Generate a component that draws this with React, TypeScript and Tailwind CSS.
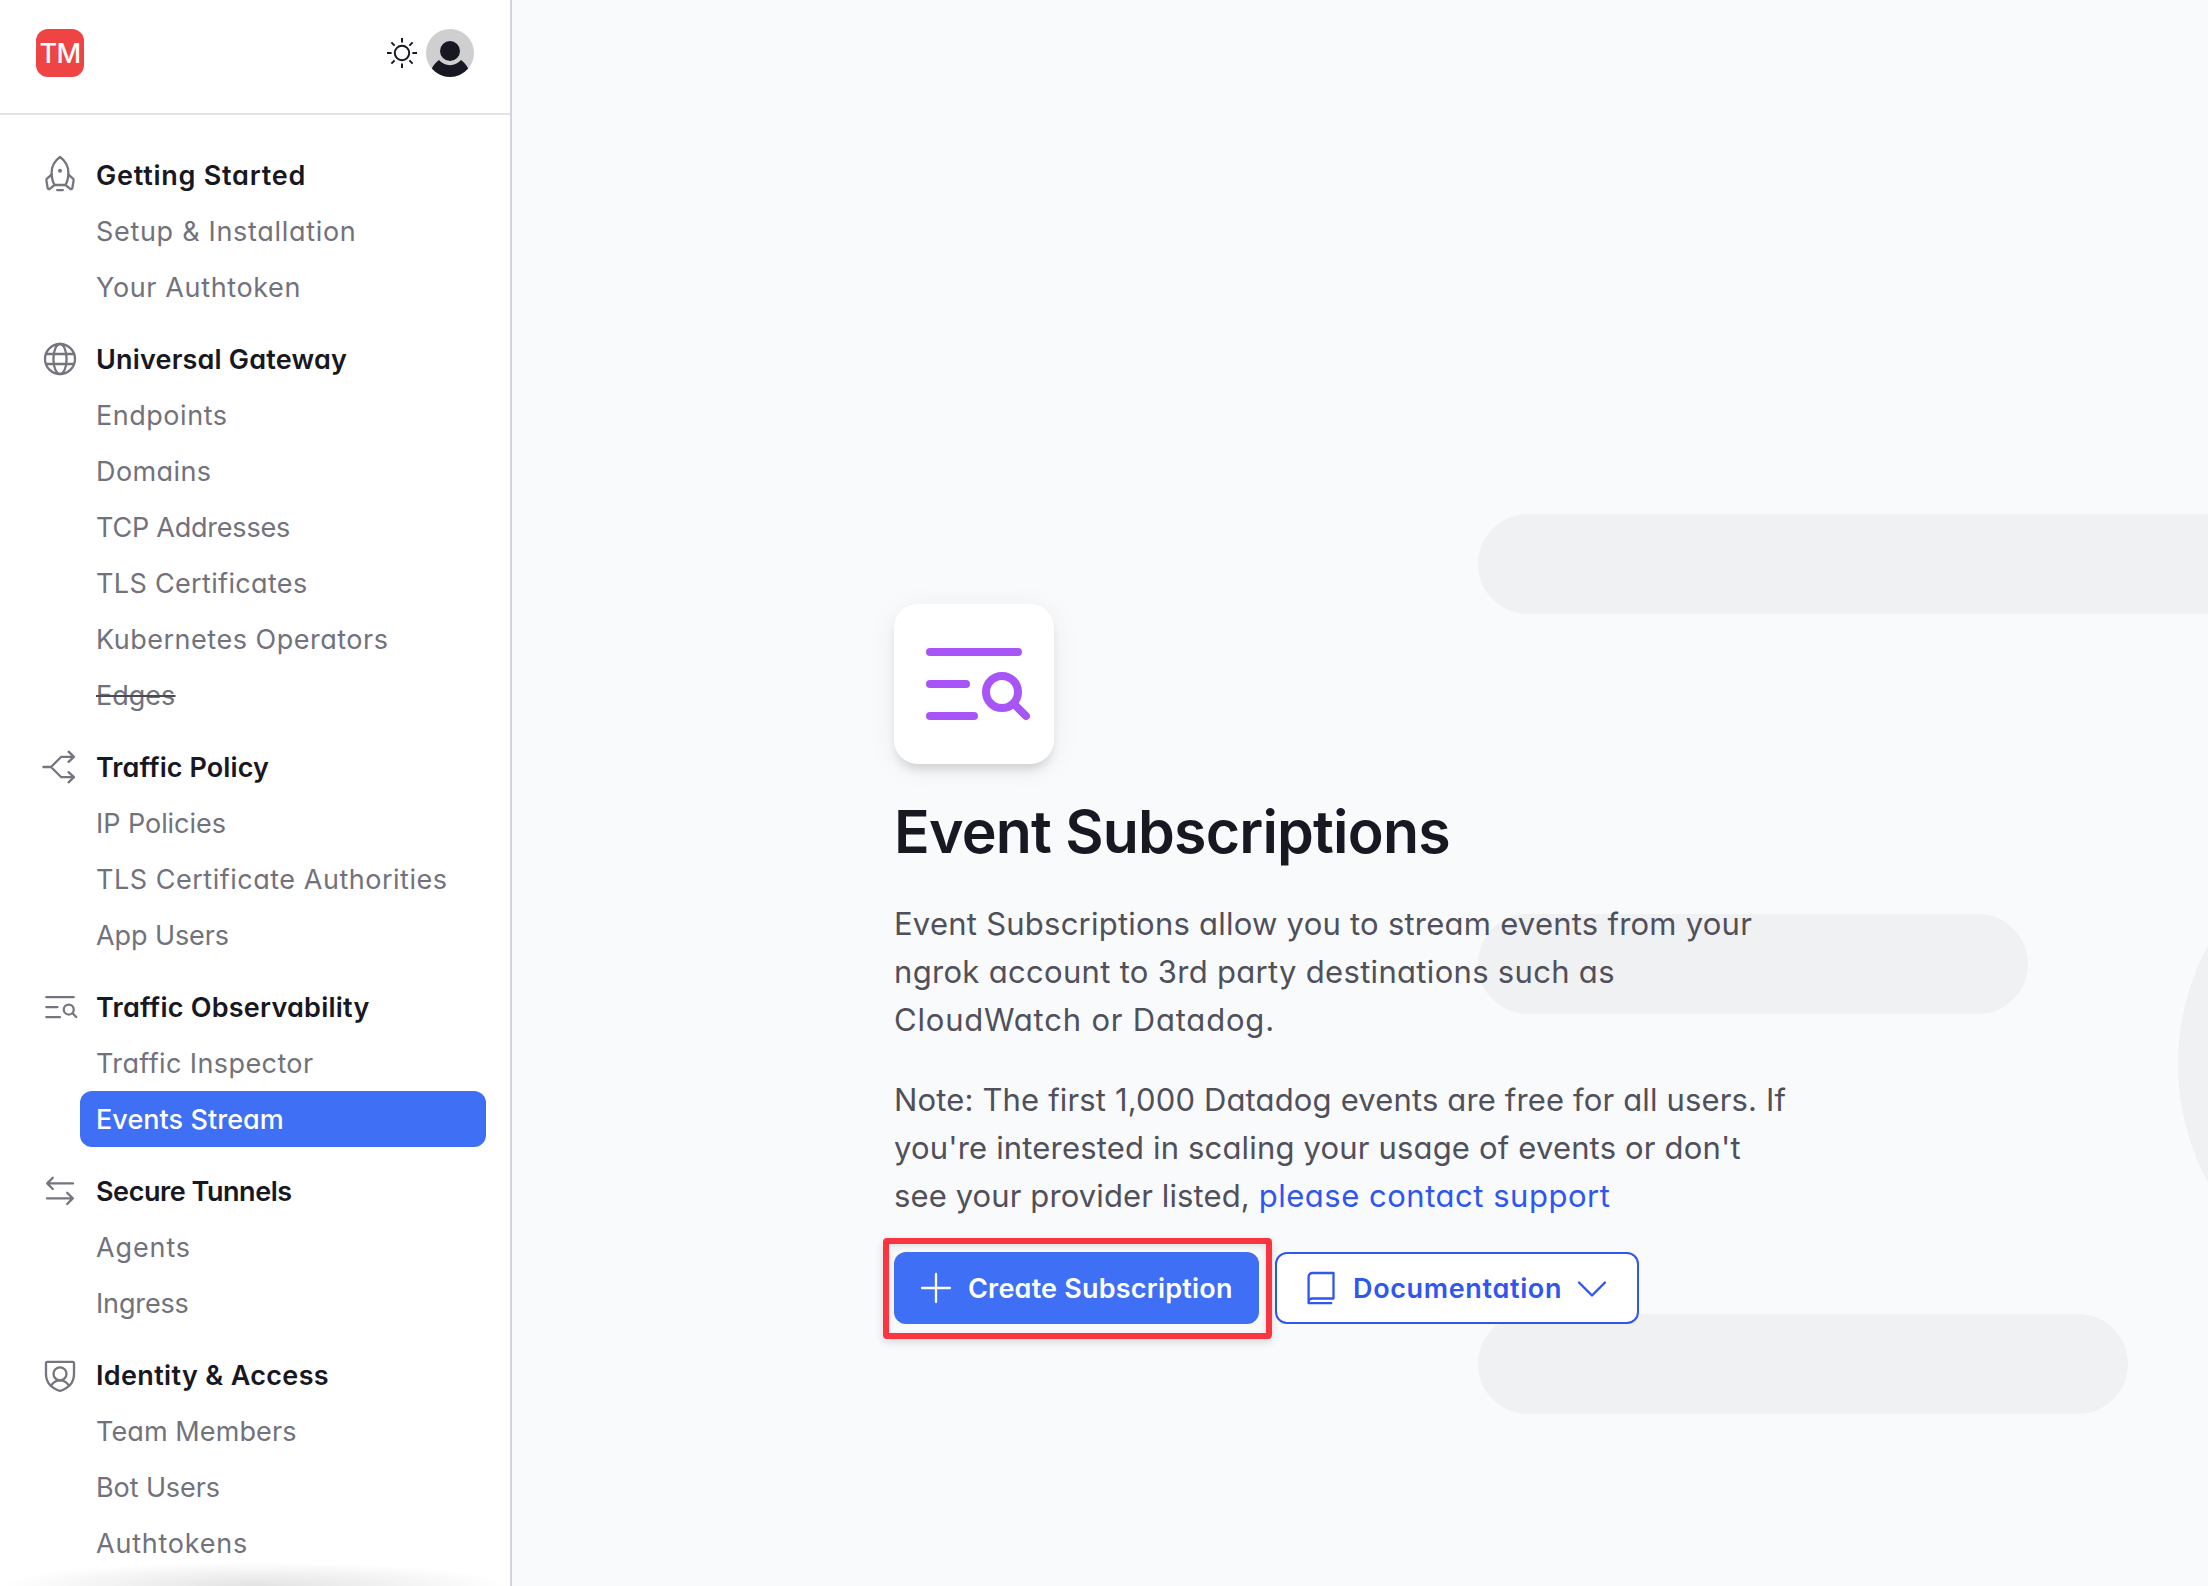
import type { ReactNode } from "react";

type Item = { label: string; tracking: string; state?: "active" | "deprecated" };
type Group = { label: string; tracking: string; icon: ReactNode; items: Item[] };

function NavIcon({ children }: { children: ReactNode }) {
  return (
    <svg
      viewBox="0 0 40 40"
      className="size-10 shrink-0 text-[#75757f]"
      fill="none"
      stroke="currentColor"
      strokeWidth="2.3"
      strokeLinecap="round"
      strokeLinejoin="round"
    >
      {children}
    </svg>
  );
}

const rocket = (
  <NavIcon>
    <path d="M20 2C16 4.800 11.600 10.500 11.600 18c0 5 1.200 9 3 12h10.800c1.800-3 3-7 3-12C28.400 10.500 24 4.800 20 2Z" />
    <path d="M11.800 19.400 7 23.600a2 2 0 0 0-.6 1.800l1.300 7.800a1.300 1.300 0 0 0 2.100.6l4.700-3.800M28.200 19.400l4.800 4.200a2 2 0 0 1 .6 1.800l-1.300 7.800a1.300 1.300 0 0 1-2.100.6l-4.700-3.800M17.200 35.200h5.600" />
    <circle cx="20" cy="15.7" r="2" fill="currentColor" stroke="none" />
  </NavIcon>
);

const globe = (
  <NavIcon>
    <circle cx="20" cy="20" r="15" />
    <ellipse cx="20" cy="20" rx="6.6" ry="15" />
    <path d="M6 15h28M6 25h28" />
  </NavIcon>
);

const split = (
  <NavIcon>
    <path d="M3.4 20H11l10.300-10.200h12.400M28.600 4.700l5.300 5.100-5.300 5.100M11 20l10.300 10.200h12.400M28.600 25.100l5.300 5.100-5.300 5.100" />
  </NavIcon>
);

const arrows = (
  <NavIcon>
    <path d="M33 12.400H7.200M12.800 6.800 7.200 12.400l5.600 5.600M7 27.400h25.800M27.200 21.800l5.600 5.600-5.600 5.600" />
  </NavIcon>
);

const shield = (
  <NavIcon>
    <path d="M7.200 6.900h25.600c.7 0 1.200.5 1.200 1.200V19c0 9-6.600 14.500-14 17C12.600 33.500 6 28 6 19V8.100c0-.7.5-1.200 1.200-1.200Z" />
    <circle cx="20" cy="18.8" r="6.5" />
    <path d="M11.200 30.600c2-3.400 5.200-5.200 8.800-5.200s6.800 1.800 8.800 5.200" />
  </NavIcon>
);

function ListSearch({ className, weight }: { className: string; weight: number }) {
  return (
    <svg viewBox="0 0 32 32" className={className} fill="none" stroke="currentColor" strokeWidth={weight} strokeLinecap="round">
      <path d="M5 8h22M5 16h9M5 24h11M26 21l3 3" />
      <circle cx="23" cy="18" r="4" />
    </svg>
  );
}

const groups: Group[] = [
  {
    label: "Getting Started",
    tracking: "tracking-[0.76px]",
    icon: rocket,
    items: [
      { label: "Setup & Installation", tracking: "tracking-[0.69px]" },
      { label: "Your Authtoken", tracking: "tracking-[0.63px]" },
    ],
  },
  {
    label: "Universal Gateway",
    tracking: "tracking-[0.18px]",
    icon: globe,
    items: [
      { label: "Endpoints", tracking: "tracking-[0.53px]" },
      { label: "Domains", tracking: "tracking-[0.41px]" },
      { label: "TCP Addresses", tracking: "tracking-[-0.22px]" },
      { label: "TLS Certificates", tracking: "tracking-[0.34px]" },
      { label: "Kubernetes Operators", tracking: "tracking-[0.51px]" },
      { label: "Edges", tracking: "tracking-[0px]", state: "deprecated" },
    ],
  },
  {
    label: "Traffic Policy",
    tracking: "tracking-[0.08px]",
    icon: split,
    items: [
      { label: "IP Policies", tracking: "tracking-[-0.05px]" },
      { label: "TLS Certificate Authorities", tracking: "tracking-[0.52px]" },
      { label: "App Users", tracking: "tracking-[-0.1px]" },
    ],
  },
  {
    label: "Traffic Observability",
    tracking: "tracking-[0.23px]",
    icon: <ListSearch className="size-10 shrink-0 text-[#75757f]" weight={1.8} />,
    items: [
      { label: "Traffic Inspector", tracking: "tracking-[0.4px]" },
      { label: "Events Stream", tracking: "tracking-[0.05px]", state: "active" },
    ],
  },
  {
    label: "Secure Tunnels",
    tracking: "tracking-[-0.45px]",
    icon: arrows,
    items: [
      { label: "Agents", tracking: "tracking-[0.88px]" },
      { label: "Ingress", tracking: "tracking-[-0.15px]" },
    ],
  },
  {
    label: "Identity & Access",
    tracking: "tracking-[0.34px]",
    icon: shield,
    items: [
      { label: "Team Members", tracking: "tracking-[0.1px]" },
      { label: "Bot Users", tracking: "tracking-[-0.1px]" },
      { label: "Authtokens", tracking: "tracking-[0.77px]" },
    ],
  },
];

function NavItem({ item }: { item: Item }) {
  const tone =
    item.state === "active"
      ? "rounded-xl bg-[#3e6ff4] font-medium text-white"
      : item.state === "deprecated"
        ? "text-[#72727c] line-through decoration-[#4a4a57] decoration-2"
        : "text-[#72727c]";
  return (
    <li className={`ml-20 mr-6 h-14 pl-4 leading-[58px] ${tone}`}>
      <a className={item.tracking}>{item.label}</a>
    </li>
  );
}

function Sidebar() {
  return (
    <aside className="relative flex h-full w-[512px] shrink-0 flex-col overflow-hidden border-r-2 border-[#d1d4de] bg-white">
      <header className="flex h-[115px] shrink-0 items-start justify-between border-b-2 border-[#e3e4ea] px-9 pt-[29px]">
        <div className="flex size-12 items-center justify-center rounded-xl bg-[#ef4444] text-[27px] leading-none font-medium tracking-[-0.6px] text-white">
          TM
        </div>
        <div className="flex items-center gap-1.5">
          <svg viewBox="0 0 36 36" className="size-9 text-[#181822]" fill="none" stroke="currentColor" strokeWidth="2">
            <circle cx="18" cy="18" r="7.2" />
            <path d="M18 3v4.600M18 28.400V33M3 18h4.600M28.400 18H33M7.400 7.400l3.200 3.200M25.400 25.400l3.200 3.200M7.400 28.600l3.200-3.200M25.400 10.600l3.200-3.200" />
          </svg>
          <svg viewBox="0 0 48 48" className="size-12">
            <circle cx="24" cy="24" r="24" fill="#cfcfd2" />
            <circle cx="24" cy="22" r="10" fill="#181822" />
            <path d="M5.800 39.600c1.800-3.600 4.200-6.400 7.200-8.600a14.200 14.200 0 0 0 22 0c3 2.200 5.400 5 7.200 8.600a24 24 0 0 1-36.400 0Z" fill="#181822" />
          </svg>
        </div>
      </header>
      <nav className="flex flex-col gap-4 pt-8 text-[27px]">
        {groups.map((group) => (
          <section key={group.label}>
            <h2 className="flex h-14 items-center gap-4 pl-10 leading-14 font-semibold text-[#181822]">
              {group.icon}
              <span className={`pt-0.5 ${group.tracking}`}>{group.label}</span>
            </h2>
            <ul>
              {group.items.map((item) => (
                <NavItem key={item.label} item={item} />
              ))}
            </ul>
          </section>
        ))}
      </nav>
      <div className="absolute inset-x-0 bottom-0 h-6 bg-[radial-gradient(farthest-side_at_50%_100%,rgba(0,0,0,0.11),rgba(0,0,0,0))]" />
    </aside>
  );
}

function Backdrop() {
  return (
    <div className="absolute inset-0">
      <div className="absolute top-[514px] left-[966px] h-[100px] w-[900px] rounded-full bg-[#f0f1f3]" />
      <div className="absolute top-[914px] left-[966px] h-[100px] w-[550px] rounded-full bg-[#f0f1f3]" />
      <div className="absolute top-[1314px] left-[966px] h-[100px] w-[650px] rounded-full bg-[#f0f1f3]" />
      <div className="absolute top-[814px] left-[1666px] size-[500px] rounded-full bg-[#f0f1f3]" />
    </div>
  );
}

export default function App() {
  return (
    <div className="flex h-[1586px] w-[2208px] overflow-hidden bg-[#f9fafc] font-['Inter',sans-serif] [font-feature-settings:'cv11']">
      <Sidebar />
      <main className="relative flex-1 overflow-hidden">
        <Backdrop />
        <div className="relative flex flex-col items-start gap-8 pt-[604px] pl-[382px] text-[31px] leading-[48px] whitespace-nowrap text-[#50505a]">
          <div className="flex size-40 items-center justify-center rounded-3xl bg-white text-[#a855f7] shadow-[0_8px_12px_-4px_rgba(0,0,0,0.16),0_4px_30px_rgba(0,0,0,0.06)]">
            <ListSearch className="size-32" weight={2} />
          </div>
          <h1 className="text-[59px] leading-[72px] font-semibold tracking-[-0.8px] text-[#181822]">Event Subscriptions</h1>
          <p>
            <span className="block tracking-[0.24px]">Event Subscriptions allow you to stream events from your</span>
            <span className="block tracking-[0.31px]">ngrok account to 3rd party destinations such as</span>
            <span className="block tracking-[0.8px]">CloudWatch or Datadog.</span>
          </p>
          <p>
            <span className="block tracking-[0.15px]">Note: The first 1,000 Datadog events are free for all users. If</span>
            <span className="block tracking-[0.17px]">you're interested in scaling your usage of events or don't</span>
            <span className="block tracking-[0.11px]">
              see your provider listed, <a className="tracking-[0.52px] text-[#2f56ee]">please contact support</a>
            </span>
          </p>
          <div className="flex gap-4 text-[27px] font-semibold">
            <div className="relative">
              <button className="flex h-18 w-[365px] items-center rounded-xl bg-[#3e6ff4] pl-6 text-white">
                <svg viewBox="0 0 36 36" className="size-9" fill="none" stroke="currentColor" strokeWidth="2.3" strokeLinecap="round">
                  <path d="M18 4v28M4 18h28" />
                </svg>
                <span className="ml-3.5 pt-0.5 tracking-[0.2px]">Create Subscription</span>
              </button>
              <div className="absolute -top-3.5 -right-[13px] -bottom-[15px] -left-[11px] rounded-[4px] border-6 border-[#fa3441] shadow-[0_3px_8px_rgba(0,0,0,0.14),inset_0_2px_6px_rgba(0,0,0,0.12)]" />
            </div>
            <button className="flex h-18 w-[364px] items-center rounded-xl border-2 border-[#2f56ee] bg-white pl-6 text-[#2f56ee]">
              <svg viewBox="0 0 36 36" className="size-9" fill="none" stroke="currentColor" strokeWidth="2.3" strokeLinecap="round" strokeLinejoin="round">
                <path d="M32.500 28.500V3H11.400a3.800 3.800 0 0 0-3.800 3.800v26.400h22.600M7.600 32.200a3.700 3.700 0 0 1 3.800-3.700h21.100" />
              </svg>
              <span className="ml-4 pt-0.5 tracking-[0.65px]">Documentation</span>
              <svg viewBox="0 0 36 36" className="ml-3 size-9" fill="none" stroke="currentColor" strokeWidth="2.4" strokeLinecap="round" strokeLinejoin="round">
                <path d="m5 12.500 13 13 13-13" />
              </svg>
            </button>
          </div>
        </div>
      </main>
    </div>
  );
}
